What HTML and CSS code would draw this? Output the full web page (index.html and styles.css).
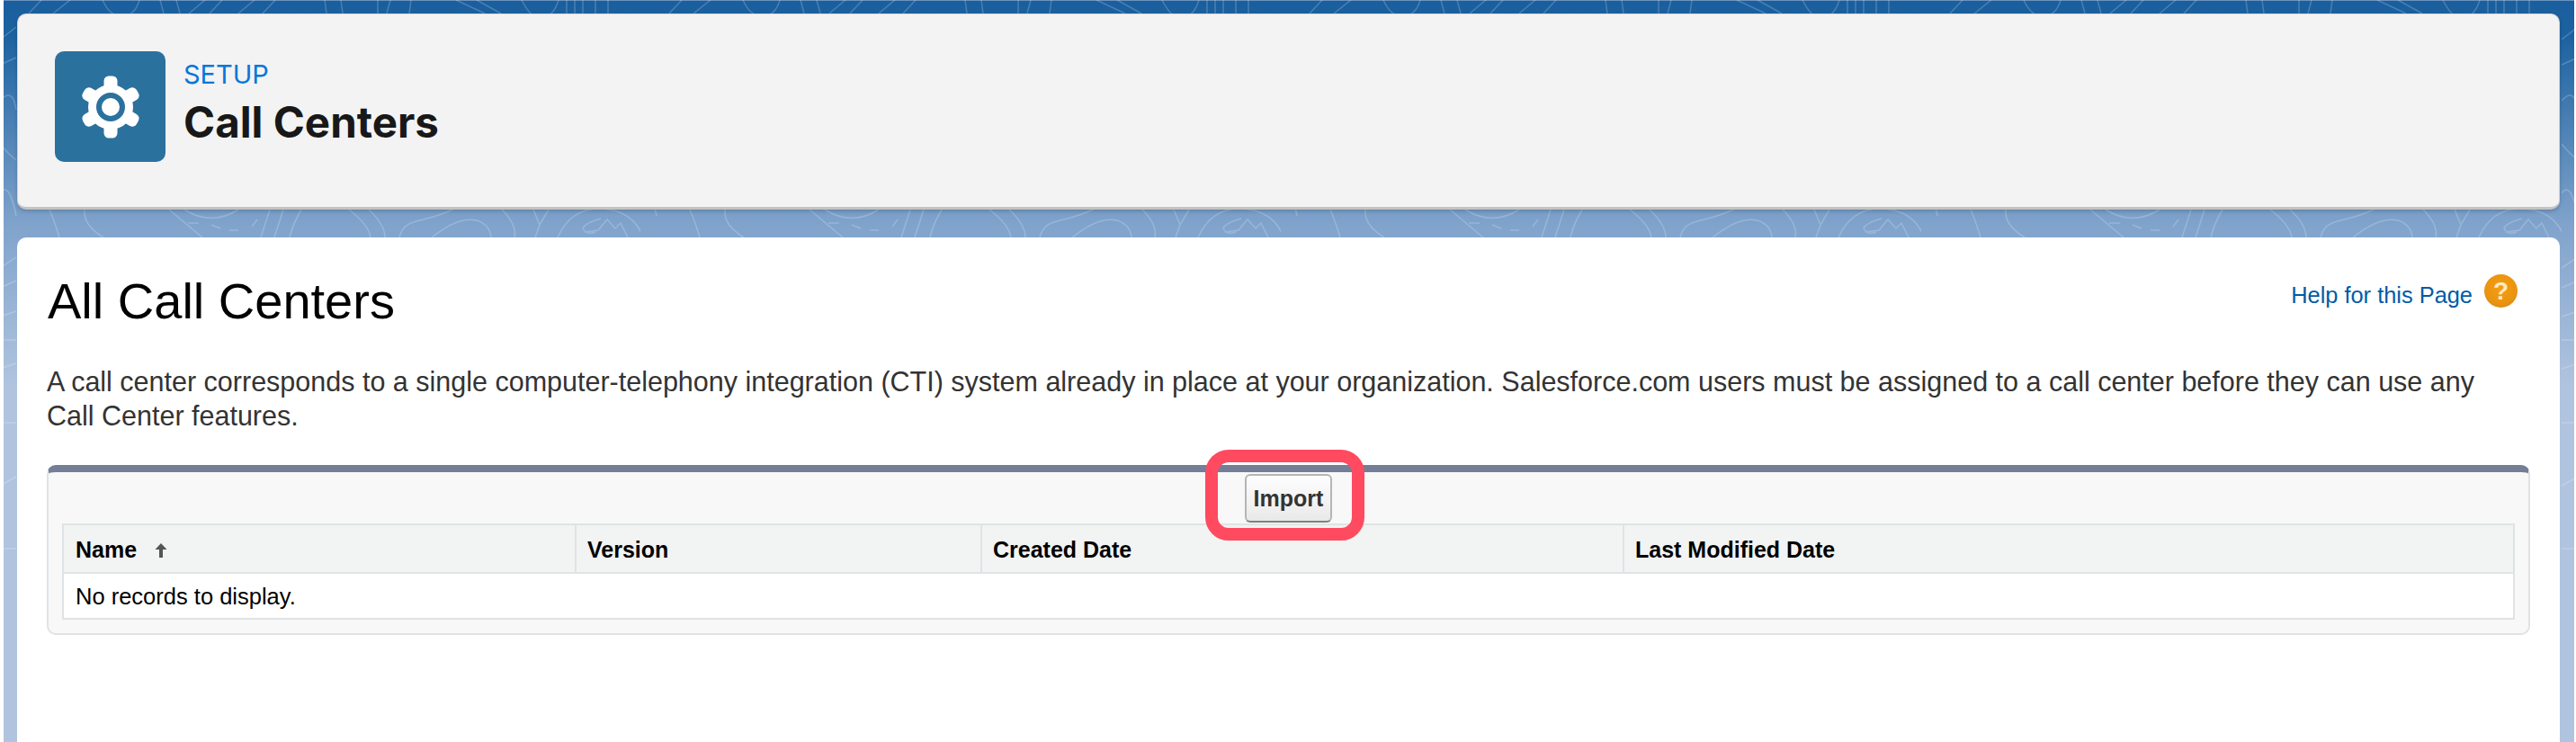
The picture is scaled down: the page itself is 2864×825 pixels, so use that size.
FILE: index.html
```html
<!DOCTYPE html>
<html lang="en">
<head>
<meta charset="utf-8">
<title>Call Centers</title>
<link rel="stylesheet" href="styles.css">
</head>
<body>
<div class="stage">
  <svg class="contours" width="100%" height="100%" aria-hidden="true">
    <defs>
      <pattern id="topo" x="-4" y="0" width="712" height="825" patternUnits="userSpaceOnUse">
        <g class="topo-lines">
          <path d="M46 0L32 15M78 0L59 15M114 0Q122 18 135 18Q150 18 155 0M178 0L182 15M196 0L200 15M228 0L210 15M247 0L233 15M283 0L265 15M306 0L292 15M361 0L363 15M379 0L381 15M420 0L420 15M434 0L430 15M457 0L455 15M507 0L539 15M530 0L557 15M580 0Q590 20 600 20Q615 20 621 0M630 0V15M639 0V15M648 0V15M662 0V15M676 0V15"/>
          <path d="M55 233Q62 250 66 264M94 233Q92 250 115 264M188 233L225 264M205 233Q235 252 265 233M209 248H221M235 250L245 254M255 256H265M280 252L286 244M300 233L290 264M315 233L305 264M335 233Q325 250 322 264"/>
          <path d="M388 233Q410 250 412 264M410 233Q428 250 428 264M444 264C450 240 470 250 505 232M480 264Q510 240 530 245Q545 250 546 264M558 233Q575 250 572 264M593 233L600 250L595 264M610 233L600 250"/>
          <path d="M620 264Q635 230 670 232Q705 235 715 264M668 243Q650 248 648 254Q652 262 662 258M650 258L665 256L675 244L684 254L690 248L698 264"/>
          <path d="M0 44Q8 38 18 30M0 72L18 64M0 112Q14 96 18 122M0 160Q10 172 18 178M0 215Q10 200 18 240M0 298L18 286M0 320L18 312M0 352L18 346M0 378H18M0 410L18 404M0 470H18M0 540L18 530M0 610H18"/>
        </g>
      </pattern>
    </defs>
    <rect width="100%" height="100%" fill="url(#topo)"/>
  </svg>

  <header class="page-header">
    <div class="setup-icon">
      <svg width="70" height="70" viewBox="-35 -35 70 70" aria-hidden="true">
        <g fill="#fff">
          <circle r="25"/>
          <rect x="-7.5" y="-34.5" width="15" height="18" rx="5.5"/>
          <rect x="-7.5" y="-34.5" width="15" height="18" rx="5.5" transform="rotate(60)"/>
          <rect x="-7.5" y="-34.5" width="15" height="18" rx="5.5" transform="rotate(120)"/>
          <rect x="-7.5" y="-34.5" width="15" height="18" rx="5.5" transform="rotate(180)"/>
          <rect x="-7.5" y="-34.5" width="15" height="18" rx="5.5" transform="rotate(240)"/>
          <rect x="-7.5" y="-34.5" width="15" height="18" rx="5.5" transform="rotate(300)"/>
        </g>
        <circle r="13" fill="none" stroke="#2b719e" stroke-width="6"/>
      </svg>
    </div>
    <div class="header-text">
      <div class="eyebrow">SETUP</div>
      <h1 class="header-title">Call Centers</h1>
    </div>
  </header>

  <main class="content-card">
    <div class="title-row">
      <h2 class="page-title">All Call Centers</h2>
      <a class="help-link" href="#">
        <span>Help for this Page</span>
        <span class="help-icon">?</span>
      </a>
    </div>
    <p class="description">A call center corresponds to a single computer-telephony integration (CTI) system already in place at your organization. Salesforce.com users must be assigned to a call center before they can use any Call Center features.</p>

    <section class="list-panel">
      <div class="toolbar">
        <div class="import-wrap">
          <button class="import-btn" type="button">Import</button>
          <div class="highlight"></div>
        </div>
      </div>
      <table class="list-table">
        <colgroup>
          <col class="col-name"><col class="col-version"><col class="col-created"><col>
        </colgroup>
        <thead>
          <tr>
            <th>Name
              <svg class="sort-arrow" width="16" height="18" viewBox="0 0 16 18" aria-hidden="true">
                <path d="M8 1L14.5 8H10V17H6V8H1.5Z" fill="#555"/>
              </svg>
            </th>
            <th>Version</th>
            <th>Created Date</th>
            <th>Last Modified Date</th>
          </tr>
        </thead>
        <tbody>
          <tr><td colspan="4">No records to display.</td></tr>
        </tbody>
      </table>
    </section>
  </main>
</div>
</body>
</html>
```

FILE: styles.css
```css
* { box-sizing: border-box; }

html, body {
  margin: 0;
  height: 825px;
  overflow: hidden;
  background: #fff;
}

.stage {
  position: relative;
  height: 825px;
  margin: 0 2px 0 4px;
  padding: 15px 16px 0 15px;
  display: flex;
  flex-direction: column;
  gap: 31px;
  overflow: hidden;
  background: linear-gradient(#1a5e9e 0, #1c62a0 40px, #80a3cc 250px, #b0c4df 430px);
  box-shadow: inset 0 1px 0 #6c93bf;
}

.contours {
  position: absolute;
  left: 0;
  top: 0;
}

.topo-lines path {
  fill: none;
  stroke: rgba(255, 255, 255, 0.2);
  stroke-width: 1.5;
}

.page-header {
  position: relative;
  flex: none;
  height: 218px;
  display: flex;
  align-items: flex-start;
  gap: 20px;
  padding: 42px 42px 0;
  background: #f3f3f3;
  border: 1px solid #d4d4d4;
  border-bottom: 3px solid #c4c4c4;
  border-radius: 10px;
  box-shadow: 0 2px 4px rgba(0, 0, 0, 0.18);
  font-family: Inter, sans-serif;
}

.setup-icon {
  width: 123px;
  height: 123px;
  flex: none;
  margin-top: -1px;
  margin-left: -1px;
  display: flex;
  align-items: center;
  justify-content: center;
  background: #2b719e;
  border-radius: 10px;
}

.header-text { padding-top: 9px; }

.eyebrow {
  font-size: 29px;
  line-height: 32px;
  color: #0b76d9;
}

.header-title {
  margin: 11px 0 0;
  font-size: 47.5px;
  line-height: 52px;
  font-weight: 700;
  color: #181818;
}

.content-card {
  position: relative;
  flex: 1;
  padding: 33px 33px 0 33px;
  background: #fff;
  border-radius: 10px 10px 0 0;
  font-family: "Liberation Sans", Arial, sans-serif;
}

.title-row {
  display: flex;
  justify-content: space-between;
  align-items: flex-start;
}

.page-title {
  margin: 2px 0 -2px 1px;
  font-size: 56px;
  line-height: 72px;
  font-weight: 400;
  color: #000;
}

.help-link {
  display: flex;
  align-items: flex-start;
  gap: 13px;
  margin-right: 14px;
  color: #015ba7;
  font-size: 25.4px;
  line-height: 30px;
  text-decoration: none;
}

.help-link > span:first-child { padding-top: 16px; }

.help-icon {
  width: 37px;
  height: 37px;
  margin-top: 8px;
  display: flex;
  align-items: center;
  justify-content: center;
  border-radius: 50%;
  background: radial-gradient(circle at 50% 42%, #f49e12 0, #ea930f 62%, #b98233 100%);
  color: #ffe9c4;
  font-size: 28px;
  font-weight: 700;
}

.description {
  margin: 36px 40px 0 0;
  font-size: 30.5px;
  line-height: 38px;
  color: #333;
}

.list-panel {
  margin-top: 36px;
  height: 189px;
  padding: 0 15px;
  background: #f8f8f8;
  border: 2px solid #e0e3e5;
  border-top: 8px solid #747e96;
  border-radius: 10px;
}

.toolbar {
  height: 57px;
  padding-top: 2px;
  display: flex;
  justify-content: center;
}

.import-wrap { position: relative; }

.import-btn {
  display: block;
  width: 97px;
  height: 54px;
  padding: 0;
  background: linear-gradient(#fdfdfd, #f2f2f2 60%, #e8e8e8);
  border: 2px solid #b5b5b5;
  border-bottom-color: #7f7f7f;
  border-radius: 6px;
  color: #333;
  font-family: "Liberation Sans", Arial, sans-serif;
  font-size: 25px;
  font-weight: 700;
}

.highlight {
  position: absolute;
  left: -44px;
  top: -27px;
  width: 177px;
  height: 101px;
  border: 14px solid #ff4a60;
  border-radius: 26px;
  pointer-events: none;
}

.list-table {
  width: 100%;
  height: 107px;
  table-layout: fixed;
  border-collapse: separate;
  border-spacing: 0;
  border: 2px solid #e0e3e5;
  background: #fff;
  color: #000;
}

.col-name { width: 568px; }
.col-version { width: 451px; }
.col-created { width: 714px; }

.list-table th {
  height: 54px;
  padding: 2px 0 0 12px;
  text-align: left;
  font-size: 25px;
  font-weight: 700;
  background: #f2f3f3;
  border-bottom: 2px solid #e0e3e5;
  border-left: 2px solid #e0e3e5;
}

.list-table th:first-child {
  padding-left: 13px;
  border-left: 0;
}

.sort-arrow {
  margin-left: 12px;
  vertical-align: -1px;
}

.list-table td {
  padding: 2px 0 0 13px;
  font-size: 25.5px;
}
```
